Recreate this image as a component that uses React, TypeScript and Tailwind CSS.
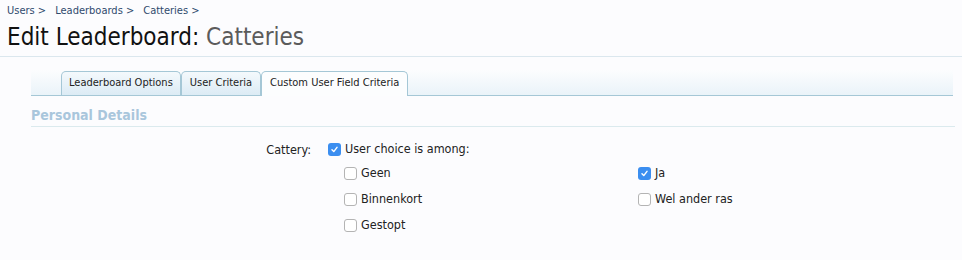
import { ReactNode } from 'react';

const font = "font-['DejaVu_Sans_Condensed','DejaVu_Sans',sans-serif]";

function Box({ checked }: { checked?: boolean }) {
  if (checked) {
    return (
      <span className="flex h-[13px] w-[13px] shrink-0 items-center justify-center rounded-[3px] bg-[#3b8ef0]">
        <svg viewBox="0 0 10 10" className="h-[9px] w-[9px]" fill="none" stroke="white" strokeWidth="1.6">
          <path d="M2.2 5.3 L4.2 7.3 L7.8 2.6" strokeLinecap="round" strokeLinejoin="round" />
        </svg>
      </span>
    );
  }
  return <span className="h-[13px] w-[13px] shrink-0 rounded-[3px] border border-[#b4b4b4] bg-white" />;
}

function Option({ label, checked }: { label: string; checked?: boolean }) {
  return (
    <label className="flex h-[26px] items-center gap-[4px]">
      <Box checked={checked} />
      <span>{label}</span>
    </label>
  );
}

function Tab({ children, active, tight }: { children: ReactNode; active?: boolean; tight?: boolean }) {
  const pad = tight ? 'px-[7px]' : 'px-[8px]';
  return (
    <div
      className={
        active
          ? `relative -mb-px flex h-[25px] items-center rounded-t-[5px] border border-b-0 border-[#a5c7d6] bg-[#fcfdfe] ${pad}`
          : `flex h-[24px] items-center rounded-t-[5px] border border-b-0 border-[#a5c7d6] bg-gradient-to-b from-[#f4f9fc] to-[#dcebf5] ${pad}`
      }
    >
      {children}
    </div>
  );
}

export default function App() {
  return (
    <div className={`h-[260px] w-[962px] overflow-hidden bg-[#fcfcfe] text-[#222] ${font}`}>
      <div className="flex gap-[9px] pl-[7px] pt-[3px] text-[11px] text-[#2f4a6d]">
        <span>Users &gt;</span>
        <span>Leaderboards &gt;</span>
        <span>Catteries &gt;</span>
      </div>
      <h1 className="pl-[7px] pt-[2px] text-[24px] leading-[30px] text-[#111]">
        Edit Leaderboard: <span className="text-[#5b5b5b]">Catteries</span>
      </h1>
      <div className="mt-[4px] h-px bg-[#dbe7ee]" />

      <div className="ml-[31px] mr-[9px] mt-[13px]">
        <div className="flex h-[26px] items-end border-b border-[#a5c7d6] bg-gradient-to-b from-[#fcfdfe] to-[#eaf3f9] pl-[30px] text-[11px] text-[#222]">
          <Tab tight>Leaderboard Options</Tab>
          <Tab>User Criteria</Tab>
          <Tab active>Custom User Field Criteria</Tab>
        </div>
        <div className="mr-[-2px] border-b border-[#dbeaee] pb-[1px] pt-[9px] text-[14px] font-bold leading-[20px] text-[#a9c6dc]">
          Personal Details
        </div>
      </div>

      <div className="mt-[15px] flex text-[12.5px] text-[#222]">
        <div className="w-[311px] text-right leading-[16px]">Cattery:</div>
        <div className="ml-[17px]">
          <label className="flex h-[16px] items-center gap-[4px]">
            <Box checked />
            <span>User choice is among:</span>
          </label>
          <div className="ml-[16px] mt-[3px] grid grid-cols-[294px_200px]">
            <Option label="Geen" />
            <Option label="Ja" checked />
            <Option label="Binnenkort" />
            <Option label="Wel ander ras" />
            <Option label="Gestopt" />
          </div>
        </div>
      </div>
    </div>
  );
}
